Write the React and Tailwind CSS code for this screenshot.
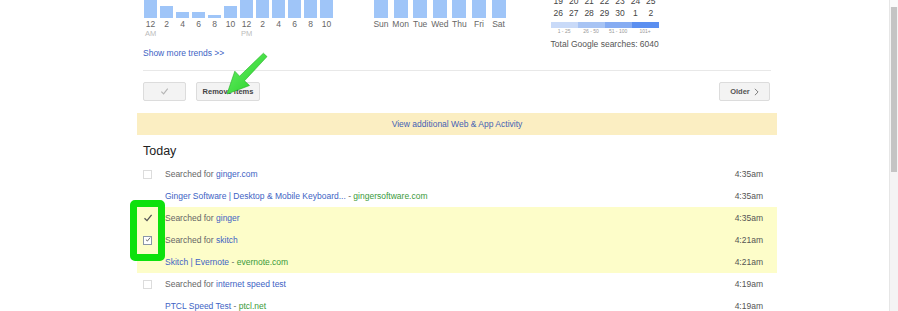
import React from 'react';

const hourBars = [18, 12, 6, 6, 3, 12, 18, 18, 18, 18, 18, 18];
const hourLabels = ['12', '2', '4', '6', '8', '10', '12', '2', '4', '6', '8', '10'];
const days = ['Sun', 'Mon', 'Tue', 'Wed', 'Thu', 'Fri', 'Sat'];
const weekA = ['19', '20', '21', '22', '23', '24', '25'];
const weekB = ['26', '27', '28', '29', '30', '1', '2'];

const legend = [
  { label: '1 - 25', color: 'bg-[#c9daf8]' },
  { label: '26 - 50', color: 'bg-[#a8c4f4]' },
  { label: '51 - 100', color: 'bg-[#86acf2]' },
  { label: '101+', color: 'bg-[#5b8ff0]' },
];

const rows = [
  { box: 'empty', kind: 'search', query: 'ginger.com', time: '4:35am' },
  { kind: 'visit', title: 'Ginger Software | Desktop & Mobile Keyboard...', site: 'gingersoftware.com', time: '4:35am' },
  { box: 'tick', kind: 'search', query: 'ginger', time: '4:35am', hl: true },
  { box: 'checked', kind: 'search', query: 'skitch', time: '4:21am', hl: true },
  { kind: 'visit', title: 'Skitch | Evernote', site: 'evernote.com', time: '4:21am', hl: true },
  { box: 'empty', kind: 'search', query: 'internet speed test', time: '4:19am' },
  { kind: 'visit', title: 'PTCL Speed Test', site: 'ptcl.net', time: '4:19am' },
];

function Tick({ className }) {
  return (
    <svg viewBox="0 0 10 10" className={className}>
      <path d="M1.5 5.2 L4 7.6 L8.6 1.8" fill="none" stroke="currentColor" strokeWidth="1.3" />
    </svg>
  );
}

function Box({ type }) {
  if (type === 'empty') {
    return <div className="w-[9px] h-[9px] border border-[#dcdcdc] bg-white" />;
  }
  if (type === 'tick') {
    return <Tick className="w-[10px] h-[10px] text-[#555]" />;
  }
  if (type === 'checked') {
    return (
      <div className="w-[9px] h-[9px] border border-[#8a96a8] bg-white flex items-center justify-center">
        <Tick className="w-[9px] h-[9px] -mt-[2px] ml-[1px] text-[#444]" />
      </div>
    );
  }
  return null;
}

function HourChart() {
  return (
    <div className="flex flex-col">
      <div className="flex items-end gap-[3px] h-[18px]">
        {hourBars.map((h, i) => (
          <div key={i} className="w-[13px] bg-[#9fc5f8]" style={{ height: h }} />
        ))}
      </div>
      <div className="flex gap-[3px] leading-[12px] text-[#666]">
        {hourLabels.map((l, i) => (
          <div key={i} className="w-[13px] text-center">{l}</div>
        ))}
      </div>
      <div className="flex gap-[3px] leading-[8px] text-[7.5px] text-[#bbb]">
        {hourLabels.map((_, i) => (
          <div key={i} className="w-[13px] text-center whitespace-nowrap">
            {i === 0 ? 'AM' : i === 6 ? 'PM' : ''}
          </div>
        ))}
      </div>
    </div>
  );
}

function DayChart() {
  return (
    <div className="flex flex-col ml-[41px]">
      <div className="flex gap-[5.6px] h-[18px]">
        {days.map((d) => (
          <div key={d} className="w-[14px] h-[18px] bg-[#9fc5f8]" />
        ))}
      </div>
      <div className="flex gap-[5.6px] leading-[12px] text-[#666]">
        {days.map((d) => (
          <div key={d} className="w-[14px] text-center whitespace-nowrap flex justify-center">{d}</div>
        ))}
      </div>
    </div>
  );
}

function Calendar() {
  return (
    <div className="flex flex-col -mt-[5px] ml-[45px] w-[108px] text-[#444]">
      <div className="grid grid-cols-7 leading-[12px] text-center">
        {weekA.map((n) => <div key={n}>{n}</div>)}
      </div>
      <div className="grid grid-cols-7 leading-[12px] text-center">
        {weekB.map((n) => <div key={n}>{n}</div>)}
      </div>
      <div className="flex mt-[3px] h-[6px]">
        {legend.map((s) => <div key={s.label} className={`flex-1 ${s.color}`} />)}
      </div>
      <div className="flex leading-[6px] text-[5px] text-[#999]">
        {legend.map((s) => <div key={s.label} className="flex-1 text-center whitespace-nowrap">{s.label}</div>)}
      </div>
      <div className="mt-[4px] leading-[12px] text-center whitespace-nowrap text-[#555]">Total Google searches: 6040</div>
    </div>
  );
}

function Row({ row }) {
  return (
    <div className={`flex items-center h-[22px] pl-[6px] pr-[14px] ${row.hl ? 'bg-[#fdfdc9]' : ''}`}>
      <div className="w-[22px] flex items-center">
        {row.box && <Box type={row.box} />}
      </div>
      <div className="flex-1 whitespace-nowrap">
        {row.kind === 'search' ? (
          <>
            <span className="text-[#666]">Searched for </span>
            <span className="text-[#3d63c4]">{row.query}</span>
          </>
        ) : (
          <>
            <span className="text-[#3d63c4]">{row.title}</span>
            <span className="text-[#666]"> - </span>
            <span className="text-[#3a9a3a]">{row.site}</span>
          </>
        )}
      </div>
      <div className="text-[#555]">{row.time}</div>
    </div>
  );
}

export default function App() {
  return (
    <div className="flex w-[898px] h-[311px] overflow-hidden bg-white font-['Liberation_Sans',Arial,sans-serif] text-[8.5px]">
      <div className="relative flex-1">
        <div className="ml-[137px] w-[640px]">
          <div className="flex items-start h-[44px] pl-[7px]">
            <HourChart />
            <DayChart />
            <Calendar />
          </div>

          <div className="px-[6px]">
            <div className="mt-[2px] leading-[14px] text-[#3d63c4]">Show more trends &gt;&gt;</div>
            <div className="mt-[10px] h-px bg-[#e8e8e8]" />
            <div className="mt-[11px] flex items-center justify-between pr-px">
              <div className="flex items-center gap-[10px]">
                <div className="w-[43px] h-[19px] flex items-center justify-center rounded-[2px] border border-[#dcdcdc] bg-[#f3f3f3]">
                  <Tick className="w-[9px] h-[9px] text-[#b5b5b5]" />
                </div>
                <div className="w-[64px] h-[19px] flex items-center justify-center rounded-[2px] border border-[#dcdcdc] bg-[#f3f3f3] text-[7.5px] font-bold text-[#444]">
                  Remove items
                </div>
              </div>
              <div className="w-[51px] h-[19px] flex items-center justify-center gap-[4px] rounded-[2px] border border-[#dcdcdc] bg-[#f3f3f3] text-[7.5px] font-bold text-[#555]">
                Older
                <svg viewBox="0 0 6 10" className="w-[5px] h-[8px]">
                  <path d="M1 1 L5 5 L1 9" fill="none" stroke="#777" strokeWidth="1.2" />
                </svg>
              </div>
            </div>
          </div>

          <div className="mt-[12px] h-[22px] flex items-center justify-center bg-[#fbeec2] text-[#4462b4]">
            View additional Web &amp; App Activity
          </div>

          <div className="px-[6px] mt-[8px] leading-[16px] text-[12.5px] text-[#222]">Today</div>

          <div className="mt-[4px] flex flex-col">
            {rows.map((r, i) => <Row key={i} row={r} />)}
          </div>
        </div>

        <svg className="absolute left-0 top-0 pointer-events-none" width="300" height="120">
          <defs>
            <linearGradient id="arrowFill" x1="0" y1="0" x2="1" y2="1">
              <stop offset="0" stopColor="#6ff06f" />
              <stop offset="1" stopColor="#1fcf1f" />
            </linearGradient>
          </defs>
          <polygon
            points="227,94 249.5,85.5 244.5,80.8 267,56.6 263.4,53.2 239.6,76.2 234.8,71.2"
            fill="url(#arrowFill)"
            stroke="#1eb01e"
            strokeWidth="0.6"
          />
        </svg>

        <div className="absolute left-[130px] top-[200px] w-[35px] h-[61px] rounded-[5px] border-[7px] border-[#0de10d]" />
      </div>

      <div className="w-[9px] flex flex-col border-l border-[#e6e6e6] bg-[#f4f4f4]">
        <div className="h-[7px] bg-[#fafafa]" />
        <div className="h-[165px] mx-px bg-[#c4c4c4]" />
        <div className="flex-1" />
      </div>
    </div>
  );
}
